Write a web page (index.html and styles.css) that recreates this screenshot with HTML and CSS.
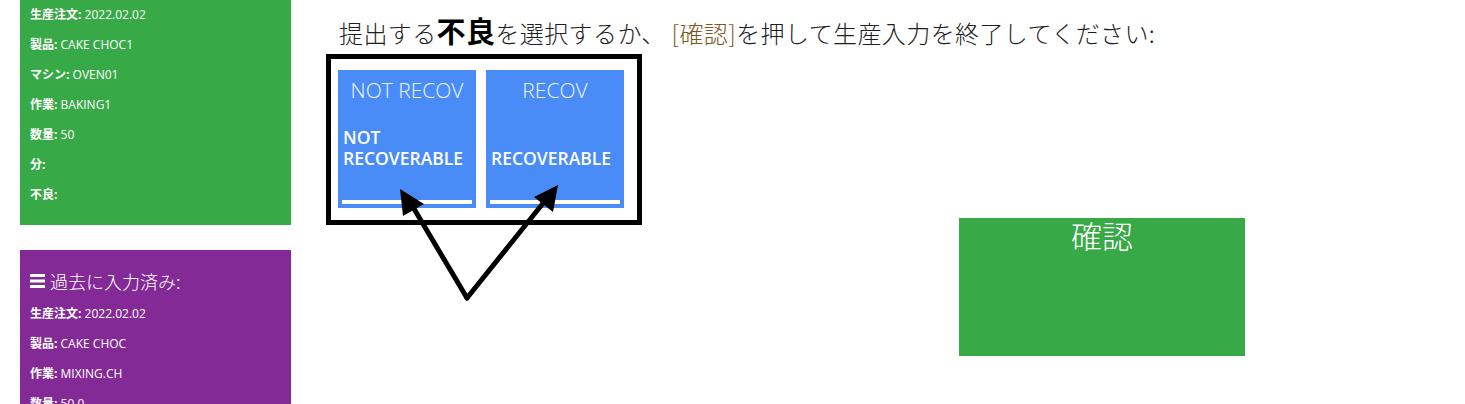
FILE: index.html
```html
<!DOCTYPE html>
<html lang="ja">
<head>
<meta charset="utf-8">
<title>生産入力</title>
<link rel="stylesheet" href="styles.css">
</head>
<body>
<div class="page">
  <aside class="sidebar">
    <section class="card card-green">
      <div class="row"><b>生産注文:</b> 2022.02.02</div>
      <div class="row"><b>製品:</b> CAKE CHOC1</div>
      <div class="row"><b>マシン:</b> OVEN01</div>
      <div class="row"><b>作業:</b> BAKING1</div>
      <div class="row"><b>数量:</b> 50</div>
      <div class="row"><b>分:</b></div>
      <div class="row"><b>不良:</b></div>
    </section>
    <section class="card card-purple">
      <h3 class="card-title">
        <svg class="burger" width="15" height="14" viewBox="0 0 15 14"><rect x="0" y="0" width="15" height="3" fill="#fff"/><rect x="0" y="5.5" width="15" height="3" fill="#fff"/><rect x="0" y="11" width="15" height="3" fill="#fff"/></svg>
        過去に入力済み:
      </h3>
      <div class="row"><b>生産注文:</b> 2022.02.02</div>
      <div class="row"><b>製品:</b> CAKE CHOC</div>
      <div class="row"><b>作業:</b> MIXING.CH</div>
      <div class="row"><b>数量:</b> 50.0</div>
    </section>
  </aside>
  <main class="main">
    <h2 class="prompt">提出する<strong>不良</strong>を選択するか、 <span class="hint">[確認]</span>を押して生産入力を終了してください:</h2>
    <div class="work">
      <div class="choices">
        <button class="defect">
          <span class="defect-code">NOT RECOV</span>
          <span class="defect-name">NOT<br>RECOVERABLE</span>
          <span class="defect-bar"></span>
        </button>
        <button class="defect">
          <span class="defect-code">RECOV</span>
          <span class="defect-name">RECOVERABLE</span>
          <span class="defect-bar"></span>
        </button>
      </div>
      <button class="confirm">確認</button>
      <svg class="arrows" width="200" height="130" viewBox="390 180 200 130">
        <line x1="467" y1="298" x2="410" y2="202" stroke="#000" stroke-width="5" stroke-linecap="round"/>
        <line x1="467" y1="298" x2="548" y2="197" stroke="#000" stroke-width="5" stroke-linecap="round"/>
        <polygon points="400,189 424,204 403,216" fill="#000"/>
        <polygon points="558,185 534,197 553,212" fill="#000"/>
      </svg>
    </div>
  </main>
</div>
</body>
</html>
```

FILE: styles.css
```css
html, body {
  margin: 0;
  padding: 0;
  background: #fff;
  overflow: hidden;
}

body {
  font-family: "Open Sans", "Noto Sans CJK JP", sans-serif;
  width: 1465px;
  height: 404px;
}

.page {
  display: flex;
  align-items: flex-start;
}

.sidebar {
  width: 271px;
  margin-left: 20px;
  display: flex;
  flex-direction: column;
  gap: 25px;
}

.card {
  color: #fff;
  padding: 0 10px;
  font-size: 12px;
}

.card-green {
  background: #38a947;
  padding-bottom: 15px;
}

.card-purple {
  background: #832a96;
  padding-top: 13px;
  height: 141px;
}

.row {
  height: 30px;
  line-height: 30px;
  white-space: nowrap;
}

.row b {
  font-weight: 700;
}

.card-title {
  margin: 0;
  height: 36px;
  line-height: 36px;
  font-size: 18px;
  font-weight: 300;
  display: flex;
  align-items: center;
  gap: 5px;
  font-family: "Noto Sans CJK JP", "Open Sans", sans-serif;
}

.burger {
  display: block;
}

.main {
  margin-left: 35px;
  padding-top: 12px;
  flex: 1;
}

.prompt {
  margin: 0 0 6px 0;
  padding-left: 13px;
  height: 36px;
  line-height: 36px;
  font-size: 24px;
  letter-spacing: 0.4px;
  font-weight: 300;
  color: #1e1e1e;
  white-space: nowrap;
  font-family: "Noto Sans CJK JP", sans-serif;
}

.prompt strong {
  font-size: 29px;
  font-weight: 700;
  color: #000;
}

.hint {
  color: #7a5a1c;
}

.work {
  display: flex;
  align-items: flex-start;
  position: relative;
}

.choices {
  display: flex;
  gap: 10px;
  border: 5px solid #000;
  padding: 11px 13px 12px 7px;
}

.defect {
  width: 138px;
  height: 138px;
  background: #4a8cf7;
  border: none;
  margin: 0;
  padding: 8px 4px 4px;
  display: flex;
  flex-direction: column;
  color: #fff;
  font-family: "Open Sans", sans-serif;
  text-align: left;
  cursor: pointer;
}

.defect-code {
  display: block;
  width: 100%;
  text-align: center;
  font-size: 21px;
  font-weight: 300;
  line-height: 24px;
  color: #eef4ff;
  white-space: nowrap;
}

.defect-name {
  display: block;
  margin-top: auto;
  margin-bottom: 31px;
  padding-left: 1px;
  font-size: 17.5px;
  font-weight: 600;
  line-height: 21px;
  white-space: nowrap;
}

.defect-bar {
  display: block;
  height: 4px;
  width: 100%;
  background: #fff;
}

.confirm {
  margin: 164px 0 0 317px;
  width: 286px;
  height: 138px;
  background: #38a947;
  border: none;
  padding: 0;
  display: flex;
  justify-content: center;
  align-items: flex-start;
  color: #fff;
  font-family: "Noto Sans CJK JP", sans-serif;
  font-size: 31px;
  font-weight: 300;
  line-height: 34px;
  cursor: pointer;
}

.arrows {
  position: absolute;
  left: 64px;
  top: 126px;
  overflow: visible;
}
```
